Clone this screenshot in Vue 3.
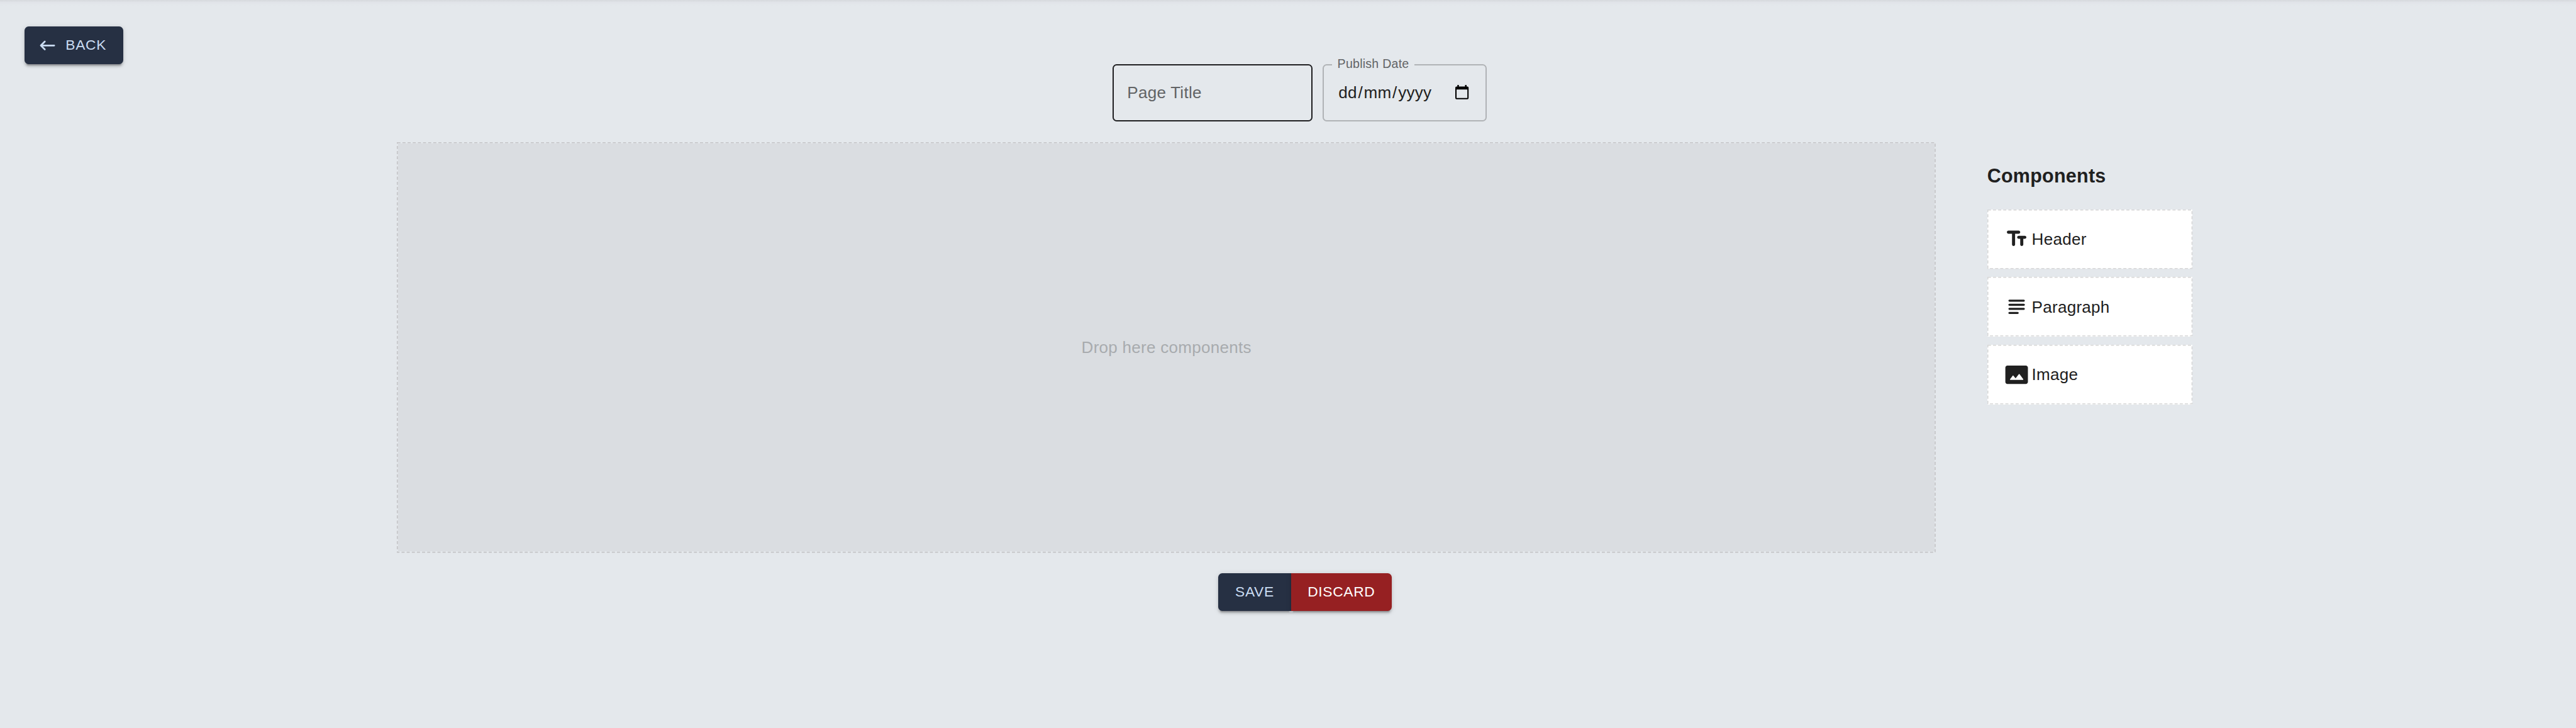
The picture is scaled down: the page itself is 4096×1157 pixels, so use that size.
<script setup>
const palette = [
  { label: 'Header', icon: 'header' },
  { label: 'Paragraph', icon: 'paragraph' },
  { label: 'Image', icon: 'image' },
]
</script>

<template>
  <div class="page">
    <div class="toolbar">
      <button class="btn primary back">
        <svg class="arrow" viewBox="0 0 24 24"><path d="M20 11H6.83l2.88-2.88c.39-.39.39-1.02 0-1.41-.39-.39-1.02-.39-1.41 0L3.71 11.3c-.39.39-.39 1.02 0 1.41L8.3 17.3c.39.39 1.02.39 1.41 0 .39-.39.39-1.02 0-1.41L6.83 13H20c.55 0 1-.45 1-1s-.45-1-1-1z" /></svg>
        <span>BACK</span>
      </button>
    </div>

    <div class="fields">
      <div class="field title"><span class="placeholder">Page Title</span></div>
      <fieldset class="field date">
        <legend>Publish Date</legend>
        <div class="value"><span>dd</span>/<span>mm</span>/<span>yyyy</span></div>
        <svg class="calendar" viewBox="0 0 26 28"><path fill-rule="evenodd" d="M4 0H7V3H19V0H22V3H23.5Q26 3 26 5.500V25.500Q26 28 23.500 28H2.500Q0 28 0 25.500V5.500Q0 3 2.500 3H4ZM2.500 9V25.500H23.500V9Z" /></svg>
      </fieldset>
    </div>

    <div class="workspace">
      <div class="drop">
        <svg class="dashes"><rect class="dash" /></svg>
        <span>Drop here components</span>
      </div>
      <aside class="palette">
        <h3>Components</h3>
        <div v-for="item in palette" :key="item.label" class="card">
          <svg class="dashes"><rect class="dash" /></svg>
          <svg class="icon" viewBox="0 0 24 24">
            <path v-if="item.icon === 'header'" d="M2.5 5.500c0 .83.67 1.500 1.500 1.500h3.500v10.500c0 .83.67 1.500 1.500 1.500s1.500-.67 1.500-1.500V7H14c.83 0 1.500-.67 1.500-1.500S14.830 4 14 4H4c-.83 0-1.500.67-1.500 1.500zM20 9h-6c-.83 0-1.500.67-1.500 1.500S13.170 12 14 12h1.500v5.500c0 .83.67 1.500 1.500 1.500s1.500-.67 1.500-1.500V12H20c.83 0 1.500-.67 1.500-1.500S20.830 9 20 9z" />
            <g v-else-if="item.icon === 'paragraph'">
              <rect x="4" y="5" width="16" height="2" rx="1" />
              <rect x="4" y="9" width="16" height="2" rx="1" />
              <rect x="4" y="13" width="16" height="2" rx="1" />
              <rect x="4" y="17" width="10" height="2" rx="1" />
            </g>
            <path v-else fill-rule="evenodd" d="M21 3H3C2 3 1 4 1 5v14c0 1.100.9 2 2 2h18c1 0 2-1 2-2V5c0-1-1-2-2-2zM5.630 16.190l2.490-3.200c.2-.25.58-.26.78-.01l2.100 2.530 3.100-3.990c.2-.26.6-.26.8.01l3.510 4.680c.25.33.01.8-.4.8H6.020c-.41-.01-.65-.49-.39-.82z" />
          </svg>
          <span class="label">{{ item.label }}</span>
        </div>
      </aside>
    </div>

    <div class="actions">
      <button class="btn primary save">SAVE</button>
      <button class="btn danger">DISCARD</button>
    </div>
  </div>
</template>

<style>
body { margin: 0; background: #e4e8ec; }
</style>

<style scoped>
.page {
  --u: 0.81561px;
  box-sizing: border-box;
  width: 4096px;
  height: 1157px;
  overflow: hidden;
  background: linear-gradient(#d6d9dd, #e1e4e9 4px, #e4e8ec 9px);
  color: #202020;
  font-family: "Liberation Sans", Arial, sans-serif;
  font-size: calc(32 * var(--u));
  letter-spacing: 0.00938em;
  line-height: 1.5;
}
.toolbar { display: flex; height: calc(73 * var(--u)); padding: calc(52 * var(--u)) 0 0 calc(48 * var(--u)); }
.btn {
  box-sizing: border-box;
  display: flex;
  align-items: center;
  justify-content: center;
  height: calc(73 * var(--u));
  padding: 0;
  border: 0;
  border-radius: calc(8 * var(--u));
  font-family: inherit;
  font-size: calc(28 * var(--u));
  letter-spacing: 0.02857em;
  line-height: 1.75;
  box-shadow: 0 calc(6 * var(--u)) calc(2 * var(--u)) calc(-4 * var(--u)) rgba(0, 0, 0, .2), 0 calc(4 * var(--u)) calc(4 * var(--u)) rgba(0, 0, 0, .14), 0 calc(2 * var(--u)) calc(10 * var(--u)) rgba(0, 0, 0, .12);
}
.primary { background: #263043; color: #cadcf2; }
.danger { width: calc(196 * var(--u)); background: #962022; color: #fff; border-radius: 0 calc(8 * var(--u)) calc(8 * var(--u)) 0; }
.save { width: calc(142 * var(--u)); border-radius: calc(8 * var(--u)) 0 0 calc(8 * var(--u)); }
.back { width: calc(192 * var(--u)); justify-content: flex-start; padding-left: calc(24 * var(--u)); gap: calc(16 * var(--u)); }
.arrow { width: calc(40 * var(--u)); height: calc(40 * var(--u)); fill: currentColor; }
.fields { display: flex; gap: calc(20 * var(--u)); margin-left: calc(2169 * var(--u)); height: calc(112 * var(--u)); }
.field {
  box-sizing: border-box;
  display: flex;
  align-items: center;
  height: 100%;
  margin: 0;
  padding: 0 calc(26 * var(--u));
  border: 2px solid #1f1f21;
  border-radius: calc(8 * var(--u));
}
.title { width: calc(390 * var(--u)); }
.placeholder { color: #626466; }
.date { position: relative; width: calc(320 * var(--u)); border-color: #b0b3b6; }
.date legend {
  position: absolute;
  top: calc(-19 * var(--u));
  left: calc(16 * var(--u));
  width: calc(160 * var(--u));
  box-sizing: border-box;
  padding: 0 0 0 calc(10 * var(--u));
  background: #e4e8ec;
  color: #626466;
  font-size: calc(24 * var(--u));
  line-height: calc(34 * var(--u));
  white-space: nowrap;
}
.value { white-space: nowrap; }
.value span { padding: 0 calc(2 * var(--u)); }
.calendar { width: calc(26 * var(--u)); height: calc(28 * var(--u)); margin-left: auto; margin-right: calc(7 * var(--u)); margin-top: calc(-2 * var(--u)); fill: #000; }
.workspace { display: flex; align-items: flex-start; gap: calc(100 * var(--u)); margin: calc(40 * var(--u)) 0 0 calc(774 * var(--u)); }
.drop {
  position: relative;
  box-sizing: border-box;
  display: flex;
  align-items: center;
  justify-content: center;
  width: calc(3000 * var(--u));
  height: calc(800 * var(--u));
  border: 2px solid transparent;
  background: #dadde1;
  background-clip: padding-box;
  color: #a8abae;
}
.dashes { position: absolute; inset: 0; width: 100%; height: 100%; overflow: visible; }
.drop .dashes { inset: -2px; width: calc(100% + 4px); height: calc(100% + 4px); }
.dash {
  x: 0.8px;
  y: 0.8px;
  width: calc(100% - 1.6px);
  height: calc(100% - 1.6px);
  fill: none;
  stroke: #d8d8d8;
  stroke-width: 1.63px;
  stroke-dasharray: 4.900px 3.256px;
}
.drop .dash { stroke: #c4c4c6; }
.palette { width: calc(400 * var(--u)); }
.palette h3 { margin: calc(38 * var(--u)) 0 calc(37 * var(--u)); font-size: calc(37.44 * var(--u)); line-height: calc(56 * var(--u)); }
.card {
  position: relative;
  box-sizing: border-box;
  display: flex;
  align-items: center;
  gap: calc(5 * var(--u));
  height: calc(116 * var(--u));
  margin-bottom: calc(16 * var(--u));
  padding-left: calc(34 * var(--u));
  background: #fff;
}
.icon { width: calc(48 * var(--u)); height: calc(48 * var(--u)); fill: #202020; }
.label { margin-top: 1px; }
.actions { display: flex; margin: calc(40 * var(--u)) 0 0 calc(2375 * var(--u)); }
</style>
